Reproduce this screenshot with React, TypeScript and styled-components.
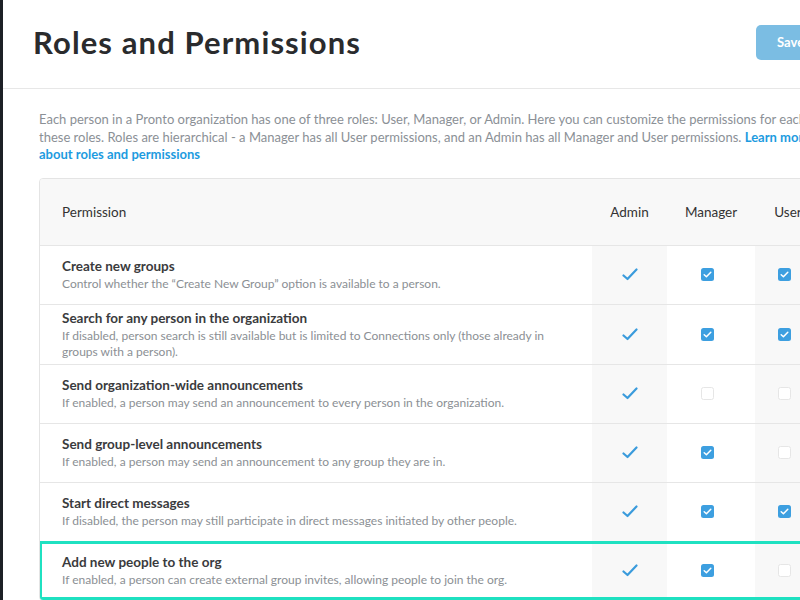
import React from "react";
import styled, { createGlobalStyle } from "styled-components";

const Global = createGlobalStyle`
  html, body { margin: 0; padding: 0; background: #fff; overflow: hidden; }
  body { font-family: Lato, "Noto Sans", "Liberation Sans", sans-serif; color: #333; }
  * { box-sizing: border-box; }
`;

const Shell = styled.div`
  display: flex;
  width: 100vw;
  height: 100vh;
  overflow: hidden;
`;

const SideStrip = styled.div`
  flex: 0 0 3px;
  background: #1d2026;
`;

const Main = styled.main`
  flex: 1;
  min-width: 0;
  overflow: hidden;
`;

const Inner = styled.div`
  width: 900px;
`;

const Header = styled.header`
  height: 89px;
  display: flex;
  align-items: center;
  justify-content: space-between;
  padding: 0 0 4px 30px;
  border-bottom: 1px solid #e7e7e7;
`;

const Title = styled.h1`
  margin: 0;
  font-size: 31px;
  font-weight: 700;
  color: #2a2b2d;
  letter-spacing: 1.1px;
`;

const SaveButton = styled.button`
  margin-right: 67px;
  height: 35px;
  width: 80px;
  padding: 0 0 0 21px;
  text-align: left;
  border: none;
  border-radius: 5px;
  background: #7bbde3;
  color: #fff;
  font-family: inherit;
  font-size: 13px;
  font-weight: 700;
`;

const Content = styled.section`
  padding: 22px 0 0 36px;
`;

const Intro = styled.p`
  margin: 0;
  width: 790px;
  font-size: 13px;
  line-height: 17.5px;
  color: #8b9096;
`;

const Link = styled.a`
  color: #1d9be0;
  font-weight: 700;
  text-decoration: none;
`;

const Table = styled.div`
  margin-top: 14px;
  width: 784px;
  border: 1px solid #e4e4e4;
  border-radius: 4px;
  overflow: hidden;
`;

const cols = "552px 75px 88px 66px";

const HeadRow = styled.div`
  display: grid;
  grid-template-columns: ${cols};
  height: 66px;
  background: #f8f8f8;
  align-items: center;
  font-size: 13.5px;
  color: #333;
`;

const HeadCell = styled.div<{ $center?: boolean }>`
  padding-left: ${(p) => (p.$center ? "0" : "22px")};
  text-align: ${(p) => (p.$center ? "center" : "left")};
`;

const Row = styled.div<{ $highlight?: boolean }>`
  position: relative;
  display: grid;
  grid-template-columns: ${cols};
  min-height: 59px;
  border-top: 1px solid #e6e6e6;
  &::after {
    content: "";
    display: ${(p) => (p.$highlight ? "block" : "none")};
    position: absolute;
    left: -1px;
    right: 0;
    top: -1px;
    bottom: 0;
    border: 3px solid #1fe1c1;
    pointer-events: none;
  }
`;

const PermCell = styled.div`
  padding: 4px 40px 4px 22px;
  display: flex;
  flex-direction: column;
  justify-content: center;
`;

const PermTitle = styled.div`
  font-size: 13.5px;
  line-height: 18px;
  font-weight: 700;
  color: #3a3b3d;
`;

const PermDesc = styled.div`
  margin-top: 1px;
  font-size: 12px;
  line-height: 16px;
  color: #8b8f94;
`;

const RoleCell = styled.div<{ $shaded?: boolean }>`
  display: flex;
  align-items: center;
  justify-content: center;
  background: ${(p) => (p.$shaded ? "#f8f8f8" : "#fff")};
`;

const Box = styled.span<{ $on: boolean }>`
  display: inline-flex;
  align-items: center;
  justify-content: center;
  width: 13px;
  height: 13px;
  margin-right: 7px;
  border-radius: 2.5px;
  background: ${(p) => (p.$on ? "#3d9fe0" : "#fff")};
  border: ${(p) => (p.$on ? "none" : "1.5px solid #e6e6e6")};
`;

const Check = () => (
  <svg width="16" height="13" viewBox="0 0 16 13">
    <polyline points="1.5,7.5 5.5,11 14.5,1.5" fill="none" stroke="#3a9bdc" strokeWidth="2.2" strokeLinecap="round" strokeLinejoin="round" />
  </svg>
);

const Checkbox = ({ on }: { on: boolean }) => (
  <Box $on={on}>
    {on && (
      <svg width="9" height="7" viewBox="0 0 9 7">
        <polyline points="1.2,3.8 3.4,5.8 7.8,1.2" fill="none" stroke="#fff" strokeWidth="1.5" strokeLinecap="round" strokeLinejoin="round" />
      </svg>
    )}
  </Box>
);

type Perm = { title: string; desc: string; manager: boolean; user: boolean; highlight?: boolean };

const perms: Perm[] = [
  { title: "Create new groups", desc: "Control whether the \u201cCreate New Group\u201d option is available to a person.", manager: true, user: true },
  { title: "Search for any person in the organization", desc: "If disabled, person search is still available but is limited to Connections only (those already in groups with a person).", manager: true, user: true },
  { title: "Send organization-wide announcements", desc: "If enabled, a person may send an announcement to every person in the organization.", manager: false, user: false },
  { title: "Send group-level announcements", desc: "If enabled, a person may send an announcement to any group they are in.", manager: true, user: false },
  { title: "Start direct messages", desc: "If disabled, the person may still participate in direct messages initiated by other people.", manager: true, user: true },
  { title: "Add new people to the org", desc: "If enabled, a person can create external group invites, allowing people to join the org.", manager: true, user: false, highlight: true },
];

export default function App() {
  return (
    <>
      <Global />
      <Shell>
        <SideStrip />
        <Main>
          <Inner>
            <Header>
              <Title>Roles and Permissions</Title>
              <SaveButton>Save</SaveButton>
            </Header>
            <Content>
              <Intro>
                Each person in a Pronto organization has one of three roles: User, Manager, or Admin. Here you can customize the permissions for each of these roles. Roles are hierarchical - a Manager has all User permissions, and an Admin has all Manager and User permissions.{" "}
                <Link href="#">Learn more about roles and permissions</Link>
              </Intro>
              <Table>
                <HeadRow>
                  <HeadCell>Permission</HeadCell>
                  <HeadCell $center>Admin</HeadCell>
                  <HeadCell $center>Manager</HeadCell>
                  <HeadCell $center>User</HeadCell>
                </HeadRow>
                {perms.map((p) => (
                  <Row key={p.title} $highlight={p.highlight}>
                    <PermCell>
                      <PermTitle>{p.title}</PermTitle>
                      <PermDesc>{p.desc}</PermDesc>
                    </PermCell>
                    <RoleCell $shaded>
                      <Check />
                    </RoleCell>
                    <RoleCell>
                      <Checkbox on={p.manager} />
                    </RoleCell>
                    <RoleCell $shaded>
                      <Checkbox on={p.user} />
                    </RoleCell>
                  </Row>
                ))}
              </Table>
            </Content>
          </Inner>
        </Main>
      </Shell>
    </>
  );
}
